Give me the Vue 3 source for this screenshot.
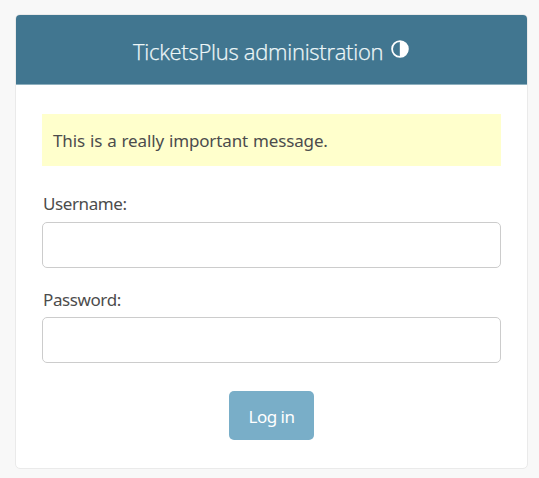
<script setup>
import { ref } from 'vue'

const username = ref('')
const password = ref('')
</script>

<template>
  <main class="page">
    <section class="card">
      <header class="header">
        <h1 class="title">TicketsPlus administration</h1>
        <button class="theme" type="button">
          <svg width="18" height="18" viewBox="0 0 18 18">
            <circle cx="9" cy="9" r="7.9" fill="none" stroke="#fff" stroke-width="1.8" />
            <path d="M8.8 1.1H9a7.9 7.9 0 0 1 0 15.8h-.2z" fill="#fff" />
          </svg>
        </button>
      </header>
      <form class="form" @submit.prevent>
        <p class="message"><span>This is a really important message.</span></p>
        <label class="label user" for="username">Username:</label>
        <input id="username" v-model="username" class="input" type="text" />
        <label class="label pass" for="password">Password:</label>
        <input id="password" v-model="password" class="input" type="password" />
        <button class="submit" type="submit">Log in</button>
      </form>
    </section>
  </main>
</template>

<style>
body {
  margin: 0;
  background: #f8f8f8;
}
</style>

<style scoped>
.page {
  box-sizing: border-box;
  height: 478px;
  padding: 14px 11px 9px 15px;
  font-family: "Noto Sans", "Open Sans", sans-serif;
  color: #4c4c4c;
}
.card {
  box-sizing: border-box;
  height: 455px;
  border: 1px solid #eaeaea;
  border-radius: 5px;
  background: #fff;
  overflow: hidden;
}
.header {
  box-sizing: border-box;
  display: flex;
  align-items: center;
  height: 70px;
  padding-left: 117px;
  background: #417690;
  border-bottom: 1px solid #8dafbe;
}
.title {
  width: 258px;
  margin: 3px 0 0;
  font-family: "Open Sans", "Noto Sans", sans-serif;
  font-size: 22px;
  line-height: 30px;
  font-weight: 300;
  letter-spacing: -0.27px;
  color: #eef7f8;
  -webkit-text-stroke: 0.25px #eef7f8;
  white-space: nowrap;
}
.theme {
  display: flex;
  margin: 0 0 2px;
  padding: 0;
  border: 0;
  background: none;
}
.form {
  display: flex;
  flex-direction: column;
  padding: 29px 26px 0;
}
.message {
  box-sizing: border-box;
  height: 52px;
  margin: 0 0 26px;
  padding: 15px 11px;
  background: #ffffcc;
  font-size: 17px;
  line-height: 24px;
  letter-spacing: -0.14px;
  word-spacing: 0.7px;
}
.label {
  height: 24px;
  padding-left: 1px;
  font-size: 17px;
  line-height: 24px;
  letter-spacing: -0.4px;
}
.user {
  margin-bottom: 6px;
}
.pass {
  margin-top: 20px;
  margin-bottom: 5px;
}
.input {
  box-sizing: border-box;
  width: 100%;
  height: 46px;
  padding: 8px 10px;
  border: 1px solid #ccc;
  border-radius: 5px;
  background: #fff;
  font: inherit;
  outline: none;
}
.submit {
  align-self: center;
  width: 85px;
  height: 49px;
  margin-top: 28px;
  padding: 1px 0 0;
  border: 0;
  border-radius: 5px;
  background: #79aec8;
  font-family: inherit;
  font-size: 17px;
  letter-spacing: -0.5px;
  color: #fff;
}
</style>
